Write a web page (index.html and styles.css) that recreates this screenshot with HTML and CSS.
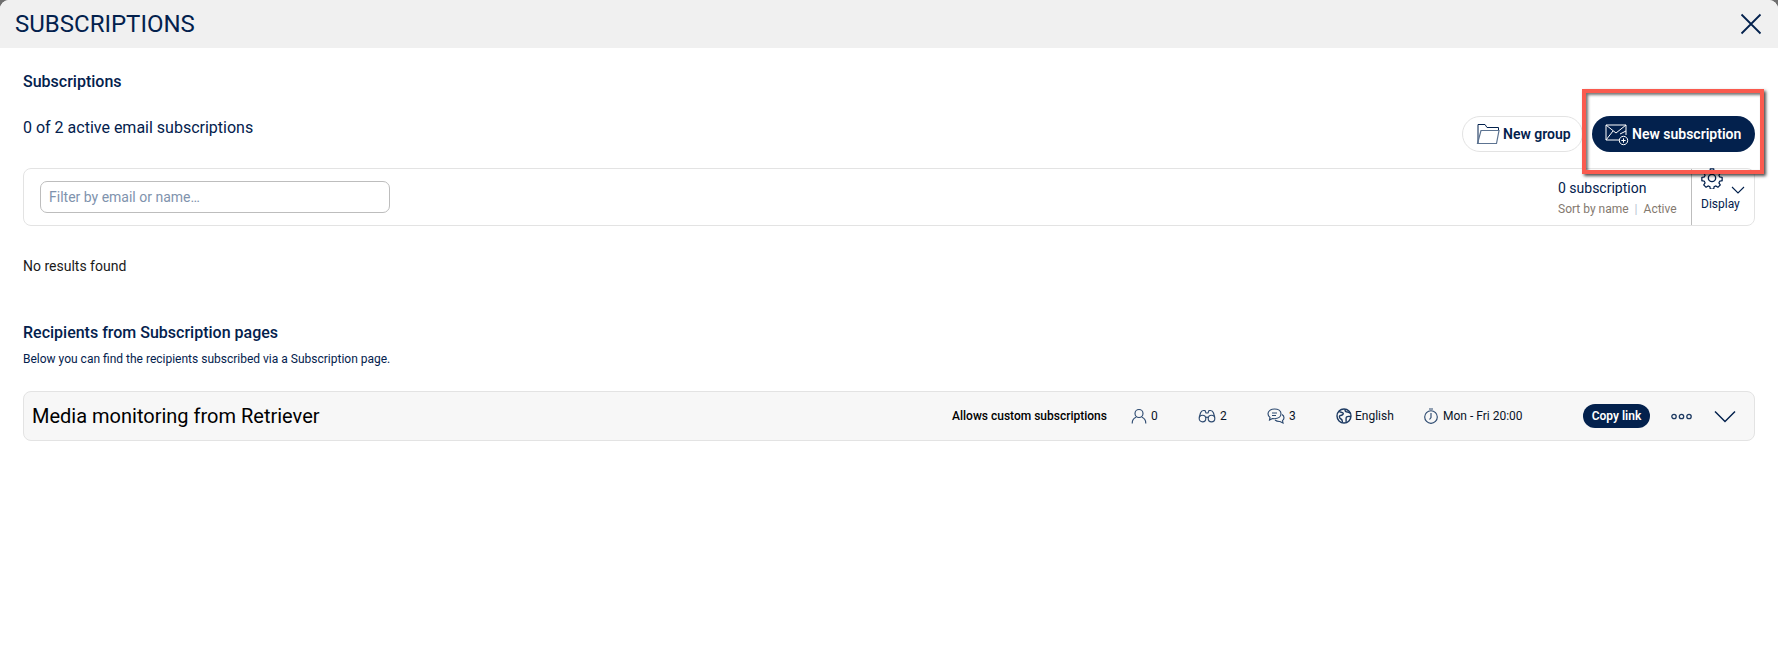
FILE: index.html
```html
<!DOCTYPE html>
<html lang="en">
<head>
<meta charset="utf-8">
<title>Subscriptions</title>
<link rel="stylesheet" href="styles.css">
</head>
<body>
<div class="modal">
  <header class="modal-head">
    <h1 class="modal-title">SUBSCRIPTIONS</h1>
    <svg class="close-icon" viewBox="0 0 22 22"><path d="M1.500 1.500 20.500 20.500M20.500 1.500 1.500 20.500"/></svg>
  </header>
  <main class="content">
    <h2 class="section-title first">Subscriptions</h2>
    <div class="summary-row">
      <p class="summary">0 of 2 active email subscriptions</p>
      <div class="actions">
        <button class="btn btn-outline">
          <svg class="btn-icon" viewBox="0 0 24 24"><path d="M2 21V2.500h7l2 3h11.500V8"/><path class="folder-front" d="M5 8.500h18l-2.500 13H1.500z"/></svg>
          New group
        </button>
        <button class="btn btn-solid">
          <svg class="btn-icon light" viewBox="0 0 24 24"><path d="M15 18H1V3h20v10"/><path d="M1 3l10 8 10-8M1 18l7-9M21 9l-6 3"/><circle cx="18.500" cy="18.500" r="4.200"/><path d="M18.500 16.300v4.400M16.300 18.500h4.400"/></svg>
          New subscription
        </button>
      </div>
    </div>
    <section class="filter-box">
      <input class="filter-input" type="text" placeholder="Filter by email or name…">
      <div class="count">
        <div class="count-main">0 subscription</div>
        <div class="count-sub"><span>Sort by name</span><i>|</i><span>Active</span></div>
      </div>
      <div class="display">
        <div class="display-icons">
          <svg class="gear" viewBox="0 0 24 24"><path d="M10 1h4l.6 3 2 .9 2.600-1.600 2.800 2.800-1.600 2.600.9 2 3 .6v4l-3 .6-.9 2 1.600 2.600-2.800 2.800-2.600-1.600-2 .9-.6 3h-4l-.6-3-2-.9-2.600 1.600-2.800-2.800 1.600-2.600-.9-2-3-.6v-4l3-.6.9-2-1.600-2.600 2.800-2.800 2.600 1.600 2-.9z" transform="translate(1.200 1.200) scale(.9)"/><circle cx="12" cy="12" r="4"/></svg>
          <svg class="chev-small" viewBox="0 0 14 8"><path d="M1 1l6 6 6-6"/></svg>
        </div>
        <div class="display-label">Display</div>
      </div>
    </section>
    <p class="no-results">No results found</p>
    <h2 class="section-title second">Recipients from Subscription pages</h2>
    <p class="note">Below you can find the recipients subscribed via a Subscription page.</p>
    <section class="panel">
      <h3 class="panel-title">Media monitoring from Retriever</h3>
      <strong class="custom">Allows custom subscriptions</strong>
      <span class="stat s-user"><svg class="stat-icon" viewBox="0 0 16 16"><circle cx="8" cy="5.500" r="4"/><path d="M1.200 15.500c0-3.500 1.800-5.500 4-6.200M14.800 15.500c0-3.500-1.800-5.500-4-6.200"/></svg>0</span>
      <span class="stat s-bin"><svg class="stat-icon wide" viewBox="0 0 18 16"><circle cx="4.500" cy="10.500" r="3.300"/><circle cx="13.500" cy="10.500" r="3.300"/><path d="M1.200 9.500 2.500 5c.6-1.700 1.500-2.500 3-2.500h1.500l1 2.500h2l1-2.500h1.500c1.500 0 2.400.8 3 2.500l1.300 4.500M7.800 9.500c.7-.4 1.700-.4 2.400 0"/></svg>2</span>
      <span class="stat s-chat"><svg class="stat-icon wide" viewBox="0 0 18 16"><path d="M7.500 1C3.900 1 1 3 1 5.800c0 1.500.8 2.700 2 3.600L2.500 12l3-1.500c.7.100 1.300.2 2 .2 3.600 0 6.500-2 6.500-4.900S11.100 1 7.500 1z"/><path d="M15 6.500c1.300.8 2 1.900 2 3.200 0 1.200-.6 2.200-1.500 2.900l.5 2.400-3-1.500c-2 .2-3.800-.5-5-1.500M5 5h5M5 7.500h4"/></svg>3</span>
      <span class="stat s-lang"><svg class="stat-icon globe" viewBox="0 0 16 16"><circle cx="8" cy="8" r="7"/><path d="M3 3.500c1.500 1 3 .5 4 1.500s-1 2.500-2.500 2.500S3 10 5 11s1 3 1.500 3.500M9 1.500c0 2 1 2.500 2.500 2.500s2 1 3 1M15 8.500c-2 0-3.500-.5-4.500.5s0 3-.5 5"/></svg>English</span>
      <span class="stat s-time"><svg class="stat-icon" viewBox="0 0 16 16"><circle cx="8" cy="9" r="6.300"/><path d="M8 5v4.500L6.500 11.500M6 1h4"/></svg>Mon - Fri 20:00</span>
      <button class="copy-link">Copy link</button>
      <svg class="dots" viewBox="0 0 21 7"><circle cx="3" cy="3.500" r="2.200"/><circle cx="10.500" cy="3.500" r="2.200"/><circle cx="18" cy="3.500" r="2.200"/></svg>
      <svg class="chev-large" viewBox="0 0 22 13"><path d="M1 1.500l10 10 10-10"/></svg>
    </section>
  </main>
  <div class="callout"></div>
</div>
</body>
</html>
```
FILE: styles.css
```css
* { box-sizing: border-box; }
html { background: #6f6f6f; height: 100%; }
body {
  margin: 0;
  height: 100%;
  font-family: Roboto, "Liberation Sans", sans-serif;
  color: #03214d;
  overflow: hidden;
}
.modal {
  position: relative;
  height: 100%;
  background: #fff;
  border-radius: 9px 9px 0 0;
  overflow: hidden;
}
.modal-head {
  height: 48px;
  background: #f0f0f0;
  display: flex;
  align-items: center;
  justify-content: space-between;
  padding: 0 16px 0 15px;
}
.modal-title {
  margin: 0;
  font-size: 24px;
  font-weight: 400;
}
.close-icon {
  width: 22px;
  height: 22px;
  fill: none;
  stroke: #03214d;
  stroke-width: 1.800;
}
.content { padding: 0 23px; }
.section-title {
  margin: 0;
  font-size: 16px;
  font-weight: 500;
  line-height: 20px;
}
.section-title.first { margin-top: 24px; }
.summary-row {
  display: flex;
  justify-content: space-between;
  height: 73px;
  margin-top: 3px;
}
.summary {
  margin: 23px 0 0;
  font-size: 16px;
  line-height: 20px;
}
.actions {
  display: flex;
  gap: 9px;
  margin-top: 21px;
}
.btn {
  height: 36px;
  border-radius: 18px;
  font: 600 14px Roboto, sans-serif;
  display: flex;
  align-items: center;
  gap: 3px;
  cursor: pointer;
  padding-bottom: 2px;
}
.btn-outline {
  width: 121px;
  padding-left: 13px;
  padding-right: 0;
  background: #fff;
  border: 1px solid #e3e3e3;
  color: #03214d;
}
.btn-solid {
  width: 163px;
  padding-left: 13px;
  padding-right: 0;
  background: #03214d;
  border: 0;
  color: #fff;
}
.btn-icon {
  width: 24px;
  height: 24px;
  fill: none;
  stroke: #03214d;
  stroke-width: 1;
}
.btn-icon.light { stroke: #fff; }
.folder-front { stroke: #5c7391; stroke-width: 1.200; }
.filter-box {
  height: 58px;
  border: 1px solid #e3e3e3;
  border-radius: 8px;
  display: flex;
  align-items: center;
  padding-left: 16px;
}
.filter-input {
  width: 350px;
  height: 32px;
  border: 1px solid #bdbdbd;
  border-radius: 7px;
  padding: 0 8px;
  font: 400 14px Roboto, sans-serif;
  outline: 0;
}
.filter-input::placeholder { color: #8093ad; opacity: 1; }
.count { margin-left: auto; width: 133px; padding-top: 2px; }
.count-main { font-size: 14px; line-height: 18px; }
.count-sub {
  margin-top: 5px;
  font-size: 12px;
  line-height: 15px;
  color: #84796f;
  display: flex;
  gap: 6px;
}
.count-sub i { font-style: normal; color: #b8c4d2; }
.display {
  width: 63px;
  height: 100%;
  border-left: 1px solid #bdbdbd;
  display: flex;
  flex-direction: column;
  padding-left: 9px;
}
.display-icons {
  height: 28px;
  display: flex;
  align-items: flex-start;
  gap: 8px;
}
.gear {
  width: 22px;
  height: 22px;
  margin-top: -2px;
  fill: none;
  stroke: #03214d;
  stroke-width: 1.500;
}
.chev-small {
  width: 14px;
  height: 8px;
  margin-top: 17px;
  fill: none;
  stroke: #03214d;
  stroke-width: 1.100;
}
.display-label { font-size: 12px; line-height: 15px; color: #03214d; }
.no-results {
  margin: 31px 0 0;
  font-size: 14px;
  line-height: 18px;
  color: #1a1a1a;
}
.section-title.second { margin-top: 48px; }
.note {
  margin: 8px 0 0;
  font-size: 12px;
  line-height: 16px;
}
.panel {
  margin-top: 24px;
  height: 50px;
  background: #f7f7f7;
  border: 1px solid #e3e3e3;
  border-radius: 8px;
  display: flex;
  align-items: center;
  padding: 0 18px 0 8px;
}
.panel-title {
  margin: 0;
  font-size: 20px;
  font-weight: 400;
  color: #000;
  flex: 1;
}
.custom {
  font-size: 12px;
  font-weight: 500;
  color: #000;
  width: 179px;
}
.stat {
  display: flex;
  align-items: center;
  gap: 4px;
  font-size: 12px;
  color: #0a1428;
}
.s-user { width: 67px; }
.s-bin { width: 69px; }
.s-chat { width: 69px; }
.s-lang { width: 87px; gap: 3px; }
.s-time { width: 160px; }
.stat-icon {
  width: 16px;
  height: 16px;
  fill: none;
  stroke: #2d4a70;
  stroke-width: 1.150;
}
.stat-icon.wide { width: 18px; }
.stat-icon.globe { stroke: #1d3a62; stroke-width: 1.400; }
.copy-link {
  width: 67px;
  height: 24px;
  border: 0;
  border-radius: 12px;
  background: #03214d;
  color: #fff;
  font: 600 12px Roboto, sans-serif;
  padding: 0;
  cursor: pointer;
}
.dots {
  width: 21px;
  height: 7px;
  margin-left: 21px;
  fill: none;
  stroke: #1d3a62;
  stroke-width: 1.300;
}
.chev-large {
  width: 22px;
  height: 13px;
  margin-left: 22px;
  fill: none;
  stroke: #03214d;
  stroke-width: 1.500;
}
.callout {
  position: absolute;
  left: 1582px;
  top: 89px;
  width: 182px;
  height: 85px;
  border: 4px solid #fa5a4e;
  box-shadow: 2px 2px 3px rgba(0, 0, 0, .7), inset 2px 2px 3px rgba(0, 0, 0, .55);
}
```
